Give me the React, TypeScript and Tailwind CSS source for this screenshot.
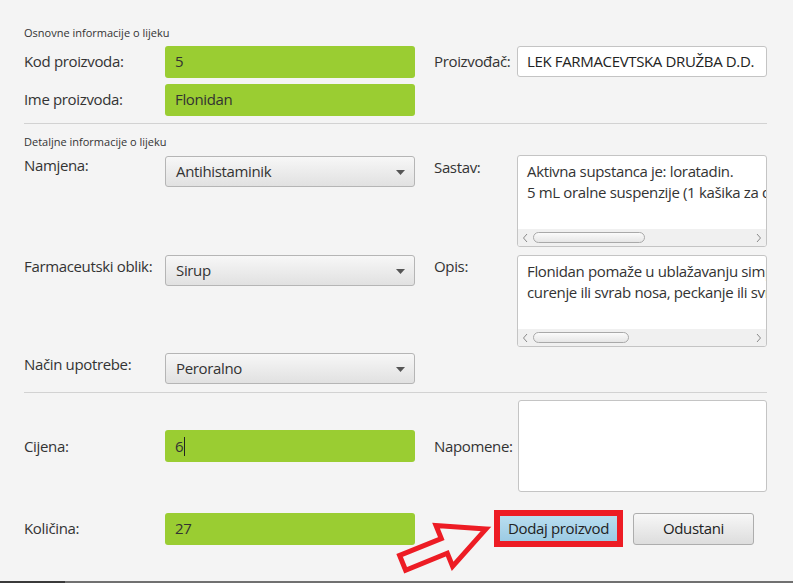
import React from "react";

const font = { fontFamily: '"Open Sans", "Noto Sans", sans-serif' };

function GreenField({ value, cursor }: { value: string; cursor?: boolean }) {
  return (
    <div className="w-[250px] h-[32px] rounded-[3px] bg-[#9acd32] flex items-center pl-[10px] text-[15px] text-[#333]">
      <span>{value}</span>
      {cursor && <span className="w-px h-[19px] bg-[#222] ml-px" />}
    </div>
  );
}

function Combo({ value }: { value: string }) {
  return (
    <div className="w-[250px] h-[31px] rounded-[3px] border border-[#b5b5b5] bg-gradient-to-b from-[#f7f7f7] to-[#e1e1e1] flex items-center justify-between pl-[10px] pr-[9px] text-[15px] text-[#333]">
      <span>{value}</span>
      <svg width="9" height="5" viewBox="0 0 9 5" className="mt-[2px]">
        <path d="M0 0 H9 L4.5 5 Z" fill="#555" />
      </svg>
    </div>
  );
}

function TextArea({ lines, thumb }: { lines: string[]; thumb: number }) {
  return (
    <div className="w-[250px] h-[92px] rounded-[3px] border border-[#c4c4c4] bg-white flex flex-col overflow-hidden">
      <div className="flex-1 overflow-hidden whitespace-nowrap pl-[9px] pt-[5px] text-[15px] leading-[21px] text-[#333]">
        {lines.map((l, i) => (
          <div key={i}>{l}</div>
        ))}
      </div>
      <div className="h-[17px] bg-[#f0f0f0] flex items-center px-[4px]">
        <svg width="7" height="10" viewBox="0 0 7 10">
          <path d="M5 1 L1.5 5 L5 9" stroke="#888" strokeWidth="1" fill="none" />
        </svg>
        <div
          className="h-[11px] ml-[4px] rounded-full border border-[#a9a9a9] bg-gradient-to-b from-[#fbfbfb] to-[#e6e6e6]"
          style={{ width: thumb }}
        />
        <div className="flex-1" />
        <svg width="7" height="10" viewBox="0 0 7 10">
          <path d="M2 1 L5.5 5 L2 9" stroke="#888" strokeWidth="1" fill="none" />
        </svg>
      </div>
    </div>
  );
}

export default function App() {
  return (
    <div
      className="relative w-[793px] h-[583px] bg-[#f4f4f4] overflow-hidden flex flex-col text-[#333] tracking-[-0.35px]"
      style={font}
    >
      <div className="pl-[24px] pt-[26px]">
        <div className="text-[11px] leading-[14px] tracking-normal text-[#333]">Osnovne informacije o lijeku</div>

        <div className="flex items-center mt-[6px] h-[31px]">
          <div className="w-[141px] text-[15px]">Kod proizvoda:</div>
          <GreenField value="5" />
          <div className="w-[83px] ml-[19px] text-[15px]">Proizvođač:</div>
          <div className="w-[250px] h-[31px] rounded-[3px] border border-[#c4c4c4] bg-white flex items-center pl-[9px] text-[15px] text-[#222] whitespace-nowrap overflow-hidden">
            LEK FARMACEVTSKA DRUŽBA D.D.
          </div>
        </div>

        <div className="flex items-center mt-[7px] h-[31px]">
          <div className="w-[141px] text-[15px]">Ime proizvoda:</div>
          <GreenField value="Flonidan" />
        </div>

        <div className="mt-[8px] w-[743px] h-px bg-[#d2d2d2]" />

        <div className="mt-[11px] text-[11px] leading-[14px] tracking-normal">Detaljne informacije o lijeku</div>

        <div className="flex mt-[6px]">
          <div className="w-[141px] text-[15px] leading-[20px]">Namjena:</div>
          <div className="mt-px">
            <Combo value="Antihistaminik" />
          </div>
          <div className="w-[83px] ml-[19px] text-[15px] leading-[22px] pt-[1px]">Sastav:</div>
          <TextArea
            lines={[
              "Aktivna supstanca je: loratadin.",
              "5 mL oralne suspenzije (1 kašika za doziranje) sadrži 5 mg loratadina.",
            ]}
            thumb={112}
          />
        </div>

        <div className="flex mt-[8px]">
          <div className="w-[141px] text-[15px] leading-[22px] whitespace-nowrap">Farmaceutski oblik:</div>
          <div>
            <Combo value="Sirup" />
          </div>
          <div className="w-[83px] ml-[19px] text-[15px] leading-[22px]">Opis:</div>
          <TextArea
            lines={[
              "Flonidan pomaže u ublažavanju simptoma alergijskog rinitisa,",
              "curenje ili svrab nosa, peckanje ili svrab očiju.",
            ]}
            thumb={96}
          />
        </div>

        <div className="flex mt-[6px]">
          <div className="w-[141px] text-[15px] leading-[22px]">Način upotrebe:</div>
          <Combo value="Peroralno" />
        </div>

        <div className="mt-[8px] w-[743px] h-px bg-[#d2d2d2]" />

        <div className="flex items-center mt-[7px] h-[92px]">
          <div className="w-[141px] text-[15px]">Cijena:</div>
          <GreenField value="6" cursor />
          <div className="w-[84px] ml-[19px] text-[15px]">Napomene:</div>
          <div className="w-[249px] h-[92px] rounded-[3px] border border-[#c4c4c4] bg-white" />
        </div>

        <div className="flex items-center mt-[18px] h-[37px]">
          <div className="w-[141px] text-[15px]">Količina:</div>
          <GreenField value="27" />
          <div className="ml-[79px] w-[129px] h-[37px] border-[6px] border-[#ed1c24] bg-gradient-to-b from-[#b9def0] to-[#9ccbe3] flex items-center justify-center text-[15px] text-[#222]">
            Dodaj proizvod
          </div>
          <div className="ml-[10px] w-[121px] h-[32px] rounded-[3px] border border-[#adadad] bg-gradient-to-b from-[#f7f7f7] to-[#dddddd] flex items-center justify-center text-[15px] text-[#222]">
            Odustani
          </div>
        </div>
      </div>

      <div className="mt-auto flex h-[2px]">
        <div className="w-[65px] bg-[#3a3a3a]" />
        <div className="flex-1 bg-[#707070]" />
      </div>

      <svg
        className="absolute left-0 top-0 pointer-events-none"
        width="793"
        height="583"
        viewBox="0 0 793 583"
      >
        <polygon
          points="486,529 436,525.5 441.3,538.5 399.6,555.4 405.6,570.2 447.3,553.3 452.6,566.3"
          fill="none"
          stroke="#ed1c24"
          strokeWidth="5"
          strokeLinejoin="miter"
        />
      </svg>
    </div>
  );
}
